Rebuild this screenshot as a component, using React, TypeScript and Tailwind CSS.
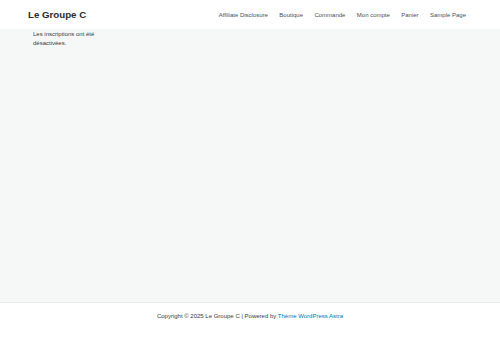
export default function App() {
  const nav = ["Affiliate Disclosure", "Boutique", "Commande", "Mon compte", "Panier", "Sample Page"];
  return (
    <div className="flex h-[348px] w-[500px] flex-col bg-[#f6f8f8] font-['Liberation_Sans',Arial,sans-serif]">
      <header className="flex h-[29px] items-center justify-between bg-white pl-[28px] pr-[34px]">
        <div className="text-[9.7px] font-bold leading-none text-[#2a2a2a]">Le Groupe C</div>
        <nav className="flex gap-[11.4px] text-[6px] leading-none text-[#4b4f58]">
          {nav.map((n) => (
            <span key={n}>{n}</span>
          ))}
        </nav>
      </header>
      <main className="flex-1 pl-[33px] pt-[1px]">
        <p className="w-[72px] text-[6px] leading-[9px] text-[#3a3a3a]">Les inscriptions ont été désactivées.</p>
      </main>
      <footer className="flex h-[46px] justify-center border-t border-[#eaeaea] bg-white pt-[9px] text-[6px] leading-[9px] text-[#3a3a3a]">
        <span>
          Copyright © 2025 Le Groupe C | Powered by <span className="text-[#0274be]">Thème WordPress Astra</span>
        </span>
      </footer>
    </div>
  );
}
